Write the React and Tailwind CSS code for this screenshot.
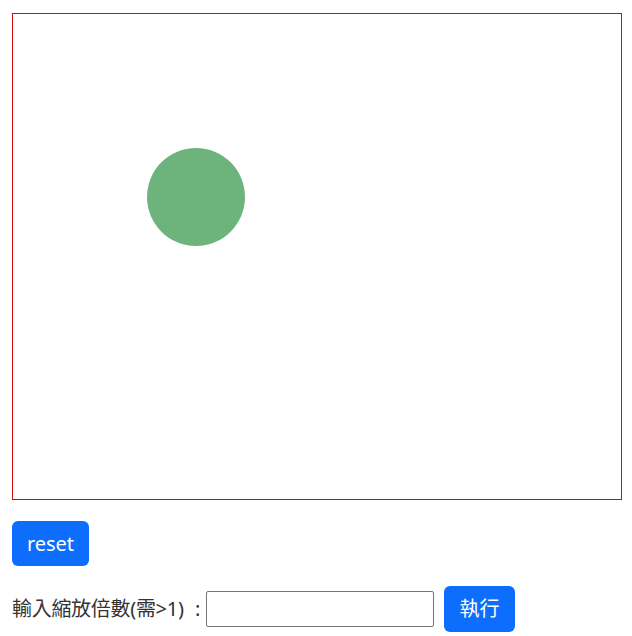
export default function App() {
  return (
    <div
      className="min-h-screen bg-white pl-3 pt-[13px] text-[#212529]"
      style={{ fontFamily: '"Noto Sans", "Noto Sans CJK TC", sans-serif' }}
    >
      {/* 畫布 */}
      <div className="relative w-[610px] h-[487px] border border-[#cc1010]">
        <div className="absolute left-[134px] top-[134px] w-[98px] h-[98px] rounded-full bg-[#6cb47c]" />
      </div>

      <button className="mt-[21px] h-[45px] w-[77px] rounded-md bg-[#0d6efd] text-white text-[20px] leading-none">
        reset
      </button>

      <div className="mt-5 flex items-center">
        <label className="flex w-[194px] items-center whitespace-nowrap text-[20px] leading-none text-[#333]">
          <span className="tracking-[-0.3px]">輸入縮放倍數(需&gt;1)</span>
          <span className="flex-1 pl-[6px] text-center">:</span>
        </label>
        <input
          type="text"
          className="w-[228px] h-9 border border-[#767676] rounded-[2px] bg-white"
        />
        <button className="ml-[10px] h-[46px] w-[71px] rounded-md bg-[#0d6efd] text-white text-[20px] leading-none">
          執行
        </button>
      </div>
    </div>
  );
}
